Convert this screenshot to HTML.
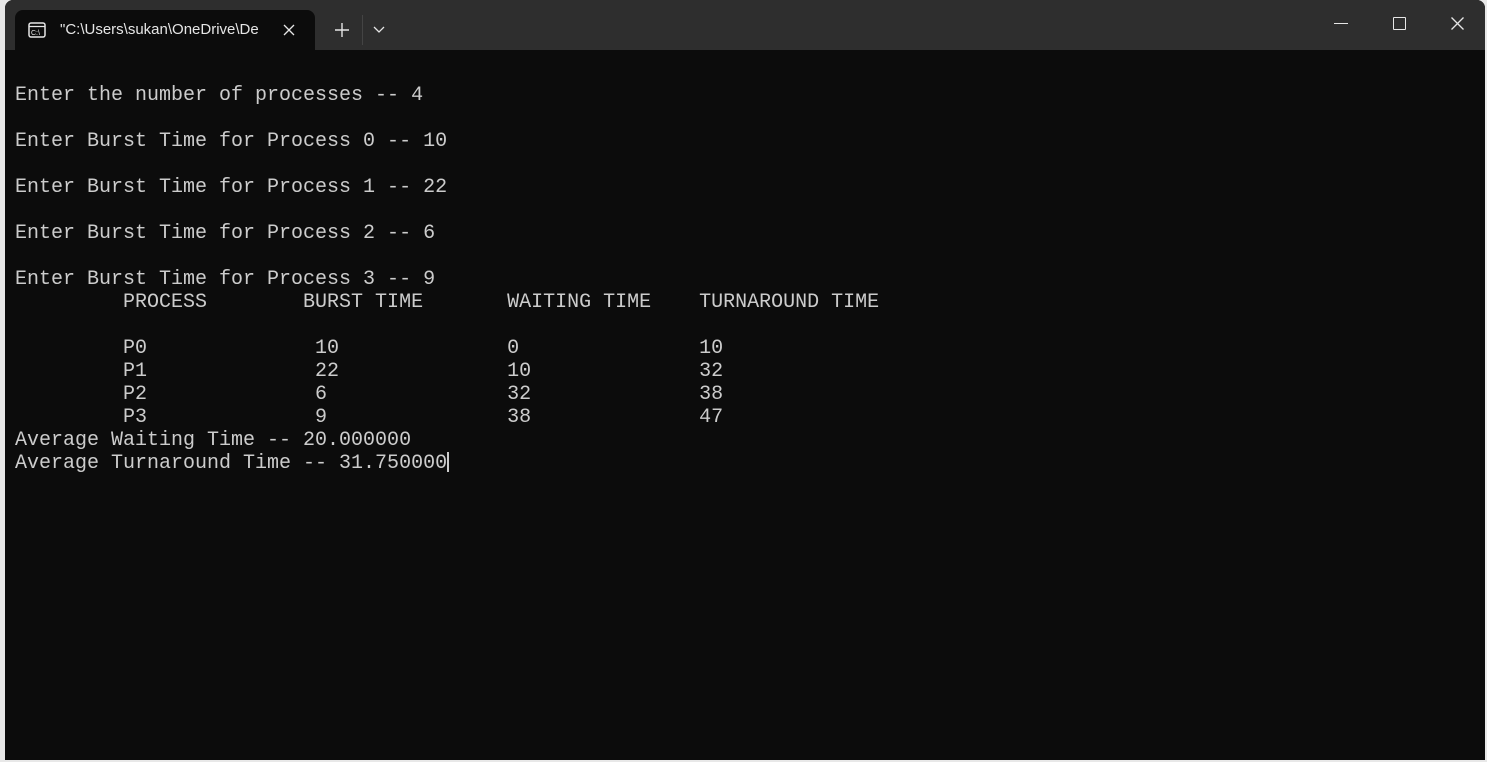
<!DOCTYPE html>
<html><head><meta charset="utf-8"><style>
html,body{margin:0;padding:0;width:1487px;height:762px;overflow:hidden;background:#e8e8e8;}
.win{position:absolute;left:5px;top:0;width:1480px;height:760px;background:#0c0c0c;border-radius:8px 8px 0 0;overflow:hidden;}
.tb{position:absolute;left:0;top:0;width:100%;height:50px;background:#2e2e2e;}
.tab{position:absolute;left:10px;top:10px;width:300px;height:40px;background:#0c0c0c;border-radius:8px 8px 0 0;}
.tab .t{position:absolute;left:45px;top:11px;color:#e6e6e6;font:15px "Liberation Sans",sans-serif;white-space:nowrap;width:205px;overflow:hidden;}
pre{position:absolute;left:10px;top:61px;margin:0;font:20px/23px "Liberation Mono","DejaVu Sans Mono",monospace;color:#cccccc;}
.cur{display:inline-block;width:2px;height:20px;background:#ccc;vertical-align:-4px;}
</style></head><body>
<div class="win">
<div class="tb">
<div class="tab">
<svg style="position:absolute;left:13px;top:12px" width="18" height="16" viewBox="0 0 18 16"><rect x="1" y="1" width="16" height="14" rx="2" fill="none" stroke="#e6e6e6" stroke-width="1.5"/><line x1="1" y1="4.5" x2="17" y2="4.5" stroke="#e6e6e6" stroke-width="1.3"/><text x="3" y="13" font-size="7" fill="#e6e6e6" font-family="Liberation Sans">C:\</text></svg>
<div class="t">"C:\Users\sukan\OneDrive\De</div>
<svg style="position:absolute;left:268px;top:14px" width="12" height="12"><path d="M1 1L11 11M11 1L1 11" stroke="#e6e6e6" stroke-width="1.3"/></svg>
</div>
<svg style="position:absolute;left:330px;top:23px" width="14" height="14"><path d="M7 0V14M0 7H14" stroke="#e6e6e6" stroke-width="1.4"/></svg>
<div style="position:absolute;left:357px;top:15px;width:1px;height:30px;background:#444"></div>
<svg style="position:absolute;left:368px;top:26px" width="12" height="8"><path d="M1 1L6 6L11 1" fill="none" stroke="#e6e6e6" stroke-width="1.3"/></svg>
<div style="position:absolute;left:1329px;top:23px;width:14px;height:1px;background:#e6e6e6"></div>
<div style="position:absolute;left:1388px;top:17px;width:11px;height:11px;border:1.3px solid #e6e6e6;border-radius:1px"></div>
<svg style="position:absolute;left:1446px;top:17px" width="13" height="13"><path d="M0.5 0.5L12.5 12.5M12.5 0.5L0.5 12.5" stroke="#e6e6e6" stroke-width="1.3"/></svg>
</div>
<pre>

Enter the number of processes -- 4

Enter Burst Time for Process 0 -- 10

Enter Burst Time for Process 1 -- 22

Enter Burst Time for Process 2 -- 6

Enter Burst Time for Process 3 -- 9
         PROCESS        BURST TIME       WAITING TIME    TURNAROUND TIME

         P0              10              0               10
         P1              22              10              32
         P2              6               32              38
         P3              9               38              47
Average Waiting Time -- 20.000000
Average Turnaround Time -- 31.750000<span class="cur"></span></pre>
</div>
</body></html>
